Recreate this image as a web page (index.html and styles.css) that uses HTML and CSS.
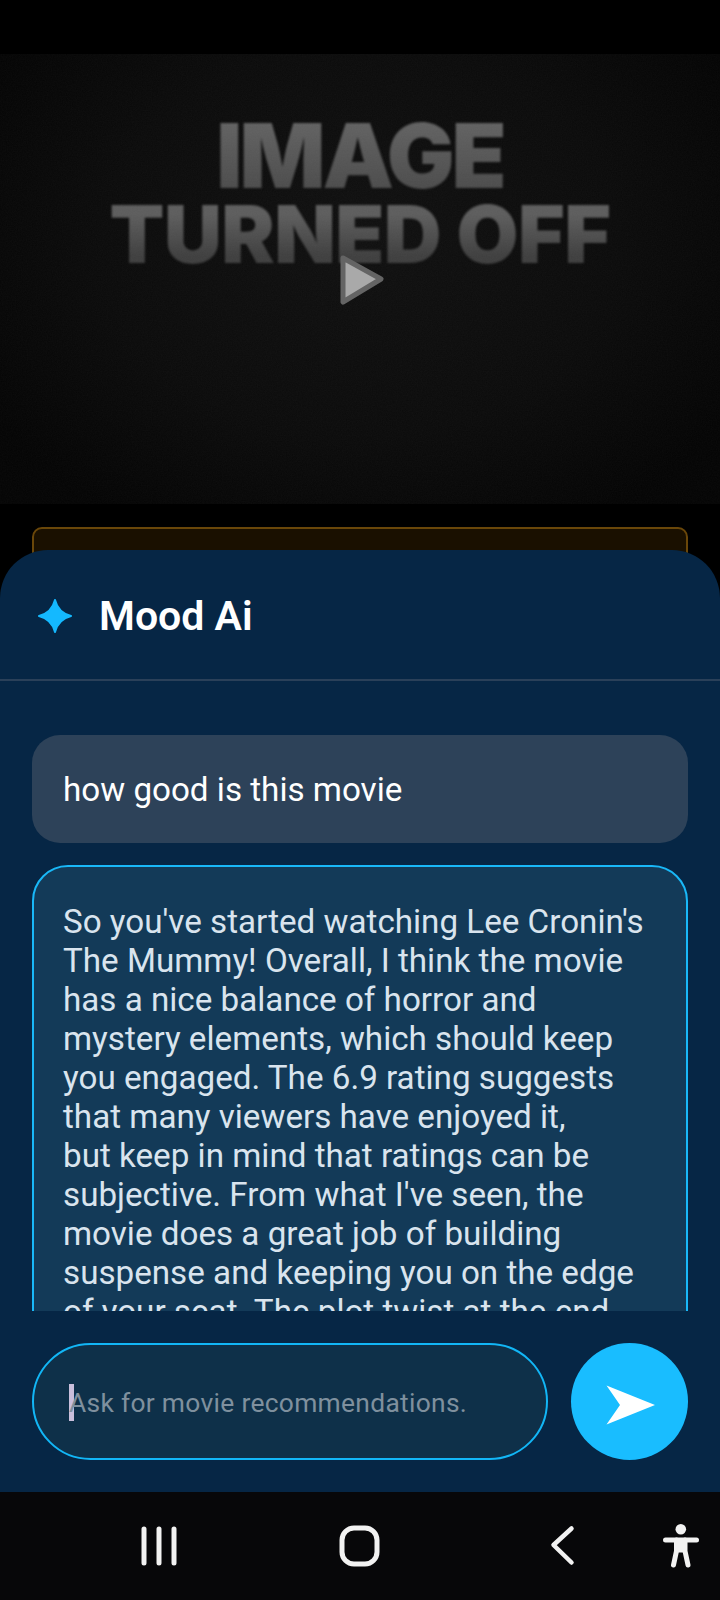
FILE: index.html
```html
<!DOCTYPE html>
<html>
  <head>
    <meta charset="utf-8">
    <title>Mood Ai</title>
    <link rel="stylesheet" href="styles.css">
  </head>
<body>
  <div class="screen">

    <div class="movie">
      <div class="poster">
        <div class="posterTitle">
          <div class="posterLine1">IMAGE</div>
          <div class="posterLine2">TURNED OFF</div>
        </div>
        <svg class="grain" width="720" height="450">
          <filter id="noise">
            <feTurbulence type="fractalNoise" baseFrequency="0.8" numOctaves="2"/>
            <feColorMatrix values="0 0 0 0 1  0 0 0 0 1  0 0 0 0 1  0 0 0 0.035 0"/>
          </filter>
          <rect width="720" height="450" filter="url(#noise)"/>
        </svg>
        <svg class="play" width="48" height="52" viewBox="0 0 48 52">
          <path d="M5 4 L43 25 L5 48 Z" fill="#a9a9a9" stroke="#646464" stroke-width="5" stroke-linejoin="round"/>
        </svg>
      </div>
      <div class="infoCard"></div>
    </div>

    <div class="sheet">
      <div class="sheetHead">
        <svg class="spark" width="34" height="34" viewBox="0 0 34 34">
          <path d="M17 1 C19 9 25 15 33 17 C25 19 19 25 17 33 C15 25 9 19 1 17 C9 15 15 9 17 1 Z" fill="#14b9ff" stroke="#14b9ff" stroke-width="2" stroke-linejoin="round"/>
        </svg>
        <div class="sheetTitle">Mood Ai</div>
      </div>

      <div class="messages">
        <div class="bubble userBubble">how good is this movie</div>
        <div class="bubble aiBubble">So you've started watching Lee Cronin's The Mummy! Overall, I think the movie has a nice balance of horror and mystery elements, which should keep you engaged. The 6.9 rating suggests that many viewers have enjoyed it,<br>but keep in mind that ratings can be subjective. From what I've seen, the movie does a great job of building suspense and keeping you on the edge of your seat. The plot twist at the end</div>
      </div>

      <div class="composer">
        <div class="askBox">
          <span class="caret"></span>
          <span class="askText">Ask for movie recommendations.</span>
        </div>
        <div class="sendBtn">
          <svg width="50" height="40" viewBox="0 0 50 40">
            <path d="M0.5 0.5 L49 20 L0.5 39.5 L14 20 Z" fill="#fff"/>
          </svg>
        </div>
      </div>

      <div class="navBar">
        <svg class="navRecent" width="36" height="42" viewBox="0 0 36 42" fill="none" stroke="#f2f2f2" stroke-width="5" stroke-linecap="round">
          <path d="M3 4 V38 M18 4 V38 M33 4 V38"/>
        </svg>
        <svg class="navHome" width="44" height="42" viewBox="0 0 44 42" fill="none" stroke="#f2f2f2" stroke-width="5">
          <rect x="3" y="3" width="35" height="36" rx="12"/>
        </svg>
        <svg class="navBack" width="26" height="42" viewBox="0 0 26 42" fill="none" stroke="#f2f2f2" stroke-width="4.5" stroke-linecap="round" stroke-linejoin="round">
          <path d="M21.5 3.5 L3.5 20 L21.5 37.5"/>
        </svg>
        <svg class="navPerson" width="40" height="48" viewBox="0 0 40 48" fill="none" stroke="#f2f2f2" stroke-linecap="round" stroke-linejoin="round">
          <circle cx="17.8" cy="7.3" r="5.3" fill="#f2f2f2" stroke="none"/>
          <path d="M2.5 18 H33.5" stroke-width="5"/>
          <path d="M13.5 18 L13.5 29 L10.5 43 M22 18 L22 29 L25 43" stroke-width="5"/>
          <path d="M13.5 19 H22 V30 H13.5 Z" fill="#f2f2f2" stroke-width="1"/>
        </svg>
      </div>
    </div>

  </div>
</body>
</html>
```

FILE: styles.css
```css
html
{
  background-color: #000;
}
body
{
  margin: 0;
  padding: 0;
  font-family: "Roboto", "Liberation Sans", sans-serif;
}
.screen
{
  position: relative;
  width: 720px;
  height: 1600px;
  overflow: hidden;
  background-color: #000;
}

/* movie page behind the sheet */
.movie
{
  padding-top: 54px;
}
.poster
{
  position: relative;
  height: 450px;
  overflow: hidden;
  background: radial-gradient(ellipse 60% 72% at 50% 42%, #0f0f0f 0%, #0a0a0a 60%, #030303 100%);
}
.posterTitle
{
  display: flex;
  flex-direction: column;
  align-items: center;
  padding-top: 66px;
  font-family: "Inter", "Roboto", sans-serif;
  font-weight: 900;
  filter: blur(0.8px);
}
.posterLine1
{
  font-size: 90px;
  line-height: 72px;
  letter-spacing: -3px;
  background: linear-gradient(#626262, #4a4a4a);
  -webkit-background-clip: text;
  background-clip: text;
  color: transparent;
}
.posterLine2
{
  margin-top: 10px;
  font-size: 80px;
  line-height: 64px;
  letter-spacing: -0.5px;
  background: linear-gradient(#5c5c5c 20%, #3e3e3e 85%);
  -webkit-background-clip: text;
  background-clip: text;
  color: transparent;
}
.grain
{
  position: absolute;
  left: 0;
  top: 0;
}
.play
{
  position: absolute;
  left: 338px;
  top: 200px;
}
.infoCard
{
  height: 60px;
  margin: 23px 32px 0;
  box-sizing: border-box;
  border: 2px solid #6a4709;
  border-radius: 10px;
  background-color: #1a1000;
}

/* bottom sheet */
.sheet
{
  position: absolute;
  left: 0;
  right: 0;
  top: 550px;
  bottom: 0;
  display: flex;
  flex-direction: column;
  border-radius: 48px 48px 0 0;
  background-color: #062645;
  overflow: hidden;
}
.sheetHead
{
  display: flex;
  align-items: center;
  flex: none;
  box-sizing: border-box;
  height: 131px;
  padding: 2px 0 0 38px;
  border-bottom: 2px solid #2a4059;
}
.spark
{
  margin-right: 27px;
}
.sheetTitle
{
  font-size: 41px;
  font-weight: 600;
  color: #fff;
}
.messages
{
  flex: 1;
  min-height: 0;
  overflow: hidden;
  display: flex;
  flex-direction: column;
  gap: 22px;
  padding: 54px 32px 0;
}
.bubble
{
  flex: none;
  font-size: 33.2px;
  line-height: 39px;
}
.userBubble
{
  padding: 35px 31px 34px;
  border-radius: 28px;
  background-color: #2d4259;
  color: #fff;
}
.aiBubble
{
  padding: 35px 29px 40px;
  border: 2px solid #19b8f8;
  border-radius: 36px;
  background-color: #133a58;
  color: #d9e4ee;
}
.composer
{
  display: flex;
  flex: none;
  gap: 23px;
  padding: 32px;
}
.askBox
{
  flex: 1;
  display: flex;
  align-items: center;
  box-sizing: border-box;
  height: 117px;
  padding: 2px 0 0 35px;
  border: 2px solid #12b6f6;
  border-radius: 59px;
  background-color: #0e3049;
}
.caret
{
  flex: none;
  width: 5px;
  height: 37px;
  margin-right: -5px;
  background-color: #c9bfdc;
}
.askText
{
  font-size: 26.4px;
  letter-spacing: 0.3px;
  color: #7f909e;
}
.sendBtn
{
  flex: none;
  display: flex;
  align-items: center;
  justify-content: center;
  width: 117px;
  height: 117px;
  border-radius: 50%;
  background-color: #19bdff;
}
.sendBtn svg
{
  margin: 6px 0 0 2px;
}

/* system buttons */
.navBar
{
  display: flex;
  align-items: center;
  flex: none;
  height: 108px;
  padding-left: 141px;
  box-sizing: border-box;
  background-color: #070709;
}
.navHome
{
  margin-left: 162px;
}
.navBack
{
  margin-left: 167px;
}
.navPerson
{
  margin-left: 87px;
}
```
